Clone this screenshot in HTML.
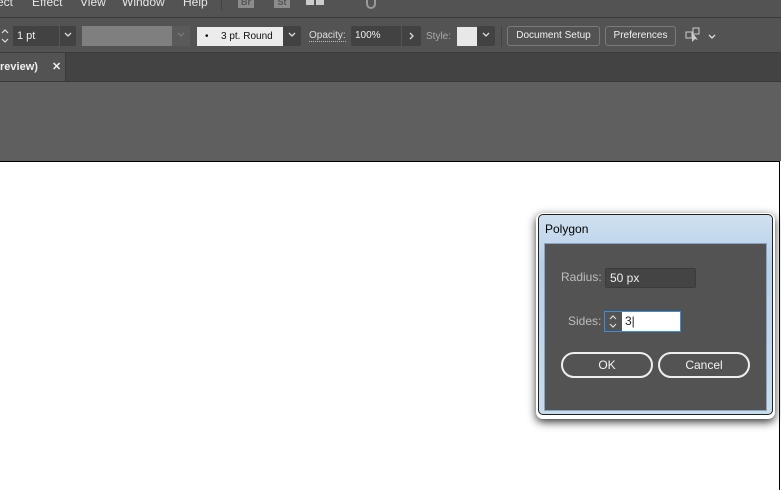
<!DOCTYPE html>
<html><head><meta charset="utf-8"><style>
*{margin:0;padding:0;box-sizing:border-box}
body{width:781px;height:490px;overflow:hidden;background:#fff;font-family:"Liberation Sans",Tahoma,sans-serif;position:relative;font-size:11px;color:#ddd}
.a{position:absolute}
.menu{left:0;top:0;width:781px;height:18px;background:#535353;border-bottom:1px solid #3a3a3a}
.menu span{position:absolute;top:-5px;font-size:12px;color:#e6e6e6}
.tool{left:0;top:18px;width:781px;height:35px;background:#535353;border-bottom:1px solid #3c3c3c}
.tabs{left:0;top:53px;width:781px;height:29px;background:#434343;border-bottom:1px solid #393939}
.gray{left:0;top:82px;width:781px;height:79px;background:#5f5f5f}
.canvas{left:0;top:161px;width:780px;height:329px;background:#fff;border-top:1px solid #000;border-right:1.5px solid #000}
.box{border-radius:2px}
.btn{border:1px solid #7a7a7a;border-radius:3px;color:#f0f0f0;font-size:10px;text-align:center;line-height:18px;height:20px}
.chev{text-align:center}
.chev svg{margin-top:6px}
</style></head><body>
<div class="a menu">
<span style="left:-3px">ect</span><span style="left:32px">Effect</span><span style="left:80px">View</span><span style="left:122px">Window</span><span style="left:183px">Help</span>
<div class="a" style="left:221px;top:0;width:1px;height:10px;background:#444"></div>
<div class="a" style="left:238px;top:0;width:16px;height:8px;background:#8c8c8c;color:#555;font-size:9px;font-weight:bold;text-align:center;line-height:4px">Br</div>
<div class="a" style="left:274px;top:0;width:16px;height:8px;background:#8c8c8c;color:#555;font-size:9px;font-weight:bold;text-align:center;line-height:4px">St</div>
<div class="a" style="left:306px;top:0;width:8px;height:5px;background:#ccc"></div>
<div class="a" style="left:316px;top:0;width:8px;height:5px;background:#ccc"></div>
<div class="a" style="left:366px;top:0;width:10px;height:9px;border:2px solid #999;border-top:none;border-radius:0 0 6px 6px"></div>
</div>
<div class="a tool">
<div class="a" style="left:0;top:8px;width:12px;height:20px"><svg width="12" height="20"><path d="M2 7l3-3 3 3M2 13l3 3 3-3" stroke="#ddd" fill="none" stroke-width="1.2"/></svg></div>
<div class="a box" style="left:13px;top:8px;width:46px;height:20px;background:#424242;color:#eee;line-height:20px;padding-left:4px">1 pt</div>
<div class="a box chev" style="left:59px;top:8px;width:17px;height:20px;background:#424242;border-left:1px solid #555"><svg width="8" height="6"><path d="M1 1l3 3 3-3" stroke="#ddd" fill="none" stroke-width="1.3"/></svg></div>
<div class="a" style="left:82px;top:8px;width:90px;height:20px;background:#7f7f7f"></div>
<div class="a chev" style="left:172px;top:8px;width:18px;height:20px;background:#5a5a5a"><svg width="8" height="6"><path d="M1 1l3 3 3-3" stroke="#777" fill="none" stroke-width="1.3"/></svg></div>
<div class="a" style="left:197px;top:9px;width:86px;height:19px;background:#ececec;color:#111;font-size:10px;line-height:19px"><span style="position:absolute;left:8px">•</span><span style="position:absolute;left:24px">3 pt. Round</span></div>
<div class="a box chev" style="left:283px;top:8px;width:18px;height:20px;background:#424242"><svg width="8" height="6"><path d="M1 1l3 3 3-3" stroke="#ddd" fill="none" stroke-width="1.3"/></svg></div>
<div class="a" style="left:309px;top:12px;font-size:10px;color:#ddd;border-bottom:1px dotted #bbb;line-height:11px">Opacity:</div>
<div class="a box" style="left:351px;top:8px;width:70px;height:20px;background:#424242;color:#eee;font-size:10px;line-height:20px;padding-left:4px">100%</div>
<div class="a" style="left:401px;top:8px;width:20px;height:20px;border-left:1px solid #555;text-align:center"><svg width="6" height="8" style="margin-top:6px"><path d="M1 1l3 3-3 3" stroke="#ddd" fill="none" stroke-width="1.3"/></svg></div>
<div class="a" style="left:426px;top:13px;font-size:10px;color:#aaa">Style:</div>
<div class="a" style="left:457px;top:9px;width:20px;height:19px;background:#e8e8e8"></div>
<div class="a box chev" style="left:477px;top:8px;width:18px;height:20px;background:#424242"><svg width="8" height="6"><path d="M1 1l3 3 3-3" stroke="#ddd" fill="none" stroke-width="1.3"/></svg></div>
<div class="a" style="left:501px;top:8px;width:1px;height:21px;background:#444"></div>
<div class="a btn" style="left:507px;top:8px;width:93px">Document Setup</div>
<div class="a btn" style="left:605px;top:8px;width:71px">Preferences</div>
<div class="a" style="left:685px;top:9px"><svg width="20" height="16"><rect x="1" y="5" width="6" height="6" fill="none" stroke="#ccc"/><rect x="8" y="1" width="6" height="6" fill="none" stroke="#ccc"/><path d="M7 5l0 10 3-3 3 1z" fill="#ccc"/></svg></div>
<div class="a" style="left:708px;top:13px"><svg width="8" height="6"><path d="M1 1l3 3 3-3" stroke="#ddd" fill="none" stroke-width="1.3"/></svg></div>
</div>
<div class="a tabs">
<div class="a" style="left:0;top:0;width:66px;height:28px;background:#535353;border-right:1px solid #3a3a3a;color:#eee;font-size:11px;font-weight:bold;line-height:28px">review)<span style="position:absolute;left:52px">✕</span></div>
</div>
<div class="a gray"></div>
<div class="a canvas"></div>
<div class="a" style="left:536px;top:213px;width:239px;height:206px;border-radius:7px;box-shadow:0 3px 9px rgba(0,0,0,.8)"></div>
<div class="a" style="left:538px;top:214px;width:235px;height:201px;border-radius:5px;border:1px solid #222;background:linear-gradient(#cfe0f0,#b7d0ea 25%,#c9dcee)">
<div class="a" style="left:6px;top:7px;color:#000;font-size:12px">Polygon</div>
<div class="a" style="left:5px;top:28px;width:223px;height:168px;background:#535353;border:1px solid #8aa5c0">
<div class="a" style="left:16px;top:26px;color:#bdbdbd;font-size:12px">Radius:</div>
<div class="a" style="left:60px;top:24px;width:91px;height:20px;background:#444;border:1px solid #3c3c3c;border-radius:2px;color:#eee;font-size:12px;line-height:18px;padding-left:4px">50 px</div>
<div class="a" style="left:23px;top:70px;color:#bdbdbd;font-size:12px">Sides:</div>
<div class="a" style="left:59px;top:67px;width:77px;height:21px;border:1px solid #3b8de0;background:#fff"><div class="a" style="left:0;top:0;width:17px;height:19px;background:#535353"><svg width="17" height="19"><path d="M5 7l3-3 3 3M5 12l3 3 3-3" stroke="#ddd" fill="none" stroke-width="1.2"/></svg></div><div class="a" style="left:20px;top:2px;color:#222;font-size:12px">3|</div></div>
<div class="a" style="left:16px;top:108px;width:92px;height:26px;border:2px solid #eee;border-radius:13px;color:#f2f2f2;font-size:12px;text-align:center;line-height:22px">OK</div>
<div class="a" style="left:113px;top:108px;width:92px;height:26px;border:2px solid #eee;border-radius:13px;color:#f2f2f2;font-size:12px;text-align:center;line-height:22px">Cancel</div>
</div>
</div>
</body></html>
